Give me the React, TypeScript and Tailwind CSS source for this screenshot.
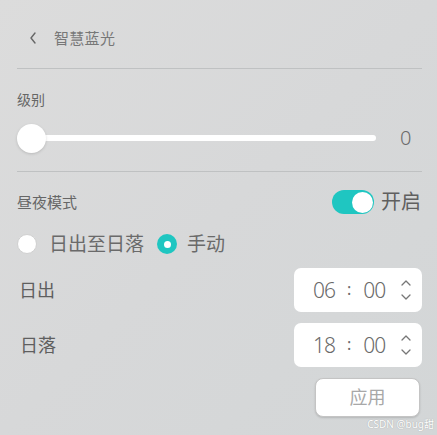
import React from 'react';

const CJK = "font-['Noto_Sans','Noto_Sans_CJK_SC',sans-serif]";

function Chevron({ up }: { up?: boolean }) {
  return (
    <svg width="10" height="6" viewBox="0 0 10 6" className="block">
      <path
        d={up ? 'M1 5 L5 1 L9 5' : 'M1 1 L5 5 L9 1'}
        fill="none"
        stroke="#777"
        strokeWidth="1.3"
        strokeLinecap="round"
        strokeLinejoin="round"
      />
    </svg>
  );
}

function TimeBox({ hour, minute }: { hour: string; minute: string }) {
  return (
    <div className="flex items-center w-[128px] h-[44px] bg-white rounded-[7px] pl-[19px] text-[#6a6a6a]">
      <span className="text-[21px] font-light leading-none w-[21px] tracking-[-1px]">{hour}</span>
      <span className="text-[16px] leading-none ml-[13px] -mt-[3px]">:</span>
      <span className="text-[21px] font-light leading-none ml-[12px] w-[21px] tracking-[-1px]">{minute}</span>
      <div className="ml-[17px] flex flex-col gap-[8px]">
        <Chevron up />
        <Chevron />
      </div>
    </div>
  );
}

export default function App() {
  return (
    <div className={`${CJK} relative w-[437px] h-[435px] overflow-hidden bg-gradient-to-br from-[#dcdcdc] via-[#d7d8d9] to-[#d3d6d7] pl-[17px] pr-[15px]`}>
      {/* header */}
      <header className="h-[68px] flex items-center pt-[8px]">
        <svg width="8" height="12" viewBox="0 0 8 12" className="ml-[12px]">
          <path d="M6 1 L2 6 L6 11" fill="none" stroke="#666" strokeWidth="1.4" strokeLinecap="round" strokeLinejoin="round" />
        </svg>
        <span className="ml-[17px] text-[15px] text-[#777] tracking-[0.3px]">智慧蓝光</span>
      </header>
      <div className="border-t border-[#bfc1c2]" />

      {/* level */}
      <div className="mt-[21px] text-[14px] leading-[20px] text-[#666]">级别</div>
      <div className="mt-[14px] flex items-center h-[28px]">
        <div className="relative w-[359px] h-full flex items-center">
          <div className="ml-[15px] flex-1 h-[6px] bg-white rounded-full" />
          <div className="absolute left-0 top-0 w-[29px] h-[29px] rounded-full bg-white shadow-[0_1px_3px_rgba(0,0,0,0.15)]" />
        </div>
        <span className="ml-[24px] text-[20px] font-light leading-none text-[#6a6a6a]">0</span>
      </div>
      <div className="mt-[19px] border-t border-[#bfc1c2]" />

      {/* day/night mode */}
      <div className="mt-[18px] flex items-center justify-between h-[24px]">
        <span className="text-[15px] text-[#666]">昼夜模式</span>
        <div className="flex items-center mr-[1px]">
          <div className="w-[42px] h-[24px] rounded-full bg-[#1fc6c1] flex items-center justify-end pr-[1px]">
            <div className="w-[21px] h-[21px] rounded-full bg-white" />
          </div>
          <span className="ml-[7px] text-[20px] text-[#5f5f5f]">开启</span>
        </div>
      </div>

      <div className="mt-[20px] flex items-center h-[20px]">
        <div className="w-[20px] h-[20px] rounded-full bg-white border border-[#d0d0d0]" />
        <span className="ml-[12px] text-[19px] text-[#6a6a6a]">日出至日落</span>
        <div className="ml-[13px] w-[20px] h-[20px] rounded-full bg-[#1fc6c1] flex items-center justify-center">
          <div className="w-[7px] h-[7px] rounded-full bg-white" />
        </div>
        <span className="ml-[10px] text-[19px] text-[#6a6a6a]">手动</span>
      </div>

      <div className="mt-[14px] flex items-center justify-between">
        <span className="pl-[2px] text-[18px] text-[#5f5f5f]">日出</span>
        <TimeBox hour="06" minute="00" />
      </div>
      <div className="mt-[11px] flex items-center justify-between">
        <span className="pl-[3px] text-[18px] text-[#5f5f5f]">日落</span>
        <TimeBox hour="18" minute="00" />
      </div>

      <div className="mt-[11px] flex justify-end pr-[2px]">
        <button className="w-[105px] h-[39px] rounded-[8px] bg-white border border-[#c4c4c4] shadow-[0_1px_2px_rgba(0,0,0,0.15)] text-[18px] text-[#a8a8a8]">
          应用
        </button>
      </div>

      <span className="absolute right-[3px] bottom-[6px] text-[10px] leading-none text-white [text-shadow:0_0_1px_rgba(0,0,0,0.3)]">
        CSDN @bug甜
      </span>
    </div>
  );
}
